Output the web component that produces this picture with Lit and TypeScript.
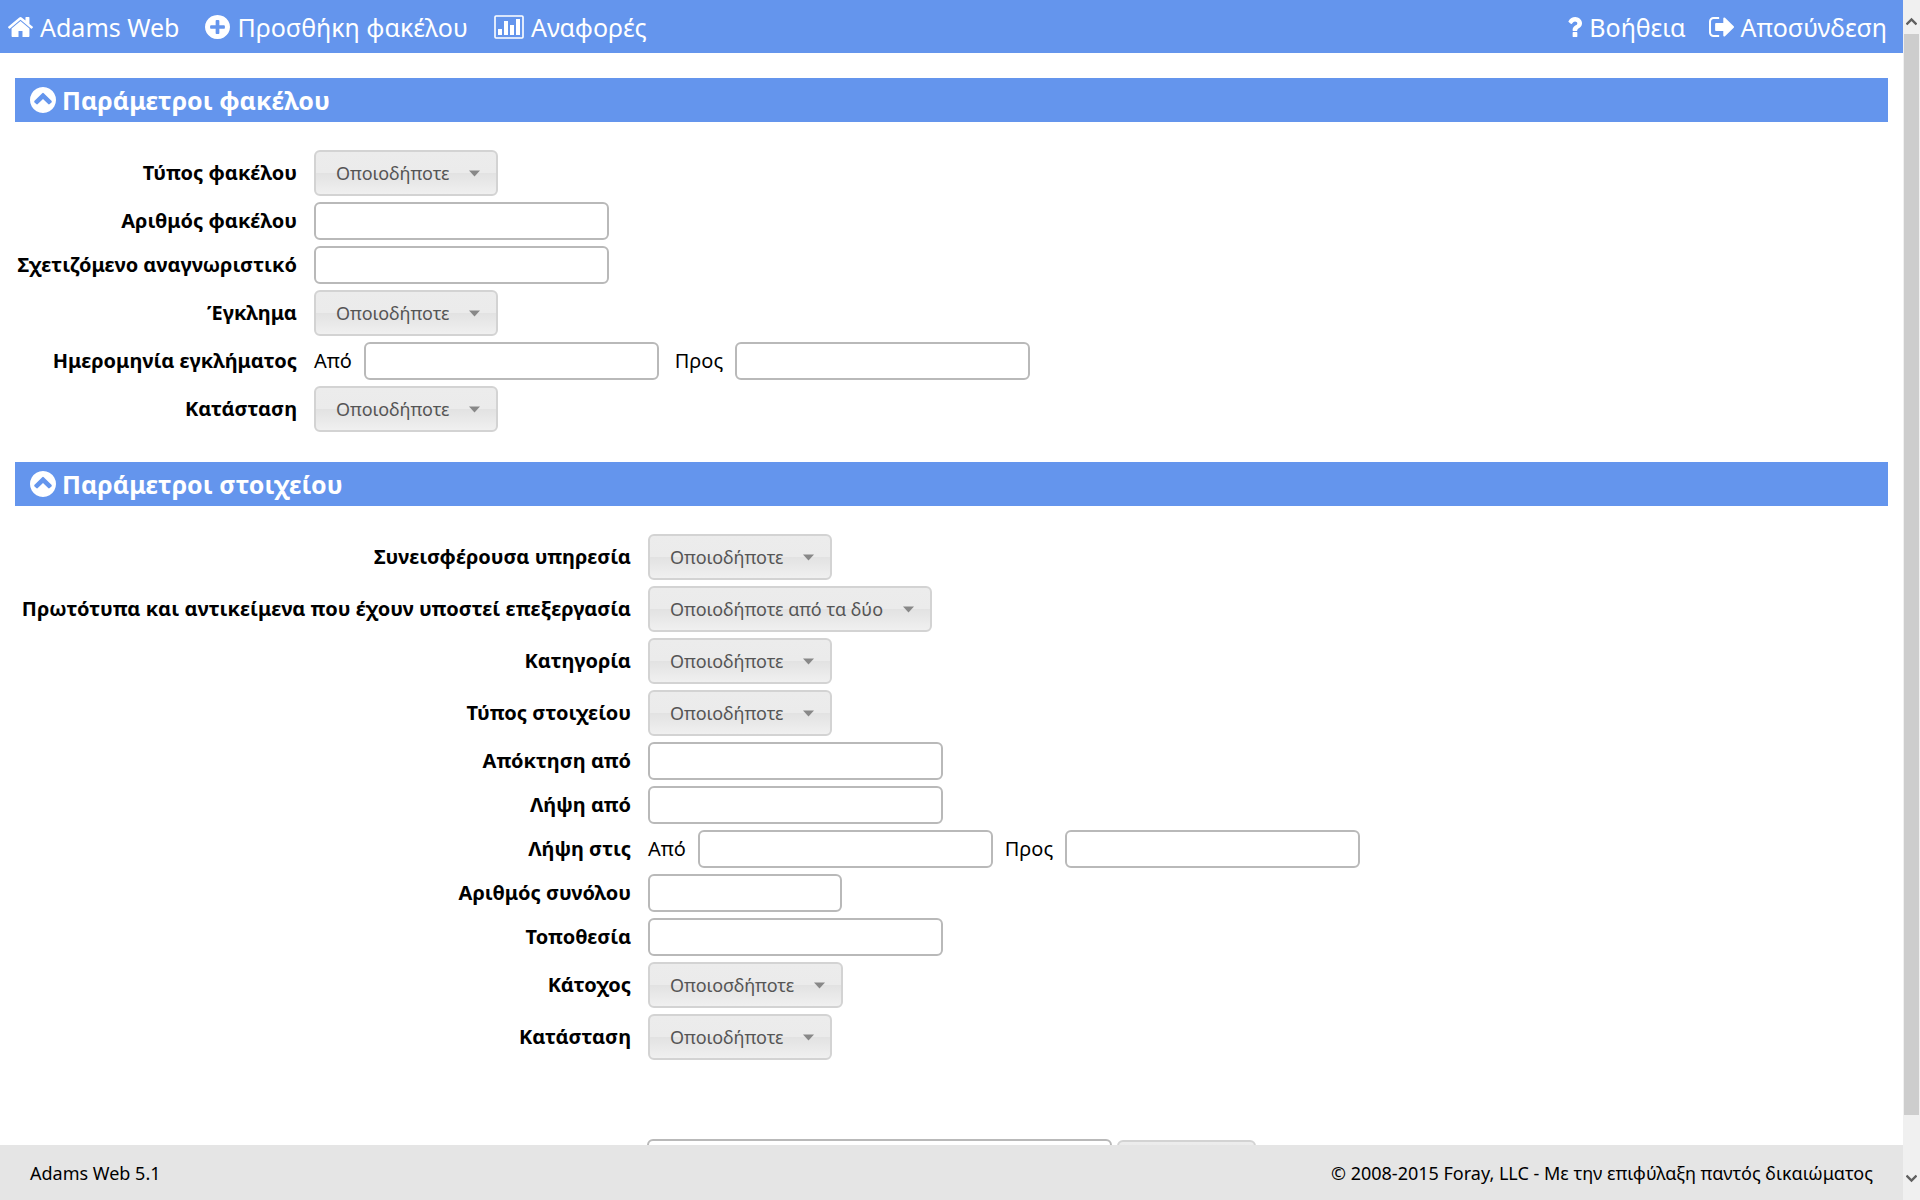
import { LitElement, html, css, svg, nothing } from "lit";
import type { TemplateResult } from "lit";
import { customElement, state } from "lit/decorators.js";

type Field =
  | { kind: "select"; id: string; label: string; value: string }
  | { kind: "text"; id: string; label: string; short?: boolean }
  | { kind: "range"; id: string; label: string; wide?: boolean };

const ANY = "Οποιοδήποτε";

const FOLDER_FIELDS: Field[] = [
  { kind: "select", id: "folder-type", label: "Τύπος φακέλου", value: ANY },
  { kind: "text", id: "folder-number", label: "Αριθμός φακέλου" },
  { kind: "text", id: "related-id", label: "Σχετιζόμενο αναγνωριστικό" },
  { kind: "select", id: "crime", label: "Έγκλημα", value: ANY },
  { kind: "range", id: "crime-date", label: "Ημερομηνία εγκλήματος", wide: true },
  { kind: "select", id: "folder-status", label: "Κατάσταση", value: ANY },
];

const ITEM_FIELDS: Field[] = [
  { kind: "select", id: "agency", label: "Συνεισφέρουσα υπηρεσία", value: ANY },
  {
    kind: "select",
    id: "originals",
    label: "Πρωτότυπα και αντικείμενα που έχουν υποστεί επεξεργασία",
    value: "Οποιοδήποτε από τα δύο",
  },
  { kind: "select", id: "category", label: "Κατηγορία", value: ANY },
  { kind: "select", id: "item-type", label: "Τύπος στοιχείου", value: ANY },
  { kind: "text", id: "acquired-by", label: "Απόκτηση από" },
  { kind: "text", id: "captured-by", label: "Λήψη από" },
  { kind: "range", id: "captured-on", label: "Λήψη στις" },
  { kind: "text", id: "set-number", label: "Αριθμός συνόλου", short: true },
  { kind: "text", id: "location", label: "Τοποθεσία" },
  { kind: "select", id: "holder", label: "Κάτοχος", value: "Οποιοσδήποτε" },
  { kind: "select", id: "item-status", label: "Κατάσταση", value: ANY },
];

const DISC =
  "M1664 896q0 209-103 385.5t-279.5 279.5-385.5 103-385.5-103-279.5-279.5-103-385.5 103-385.5 279.5-279.5 385.5-103 385.5 103 279.5 279.5 103 385.5z";

const icon = (w: number, h: number, box: string, body: TemplateResult | unknown) =>
  html`<svg width=${w} height=${h} viewBox=${box} preserveAspectRatio="none" fill="currentColor" aria-hidden="true">${body}</svg>`;

const homeIcon = icon(25, 20, "90 253 1612 1283", svg`<path d="M1472 992v480q0 26-19 45t-45 19h-384v-384h-256v384h-384q-26 0-45-19t-19-45v-480q0-1 .5-3t.5-3l575-474 575 474q1 2 1 6zm223-69l-62 74q-8 9-21 11h-3q-13 0-21-7l-692-577-692 577q-12 8-24 7-13-2-21-11l-62-74q-8-10-7-23.5t11-21.5l719-599q32-26 76-26t76 26l244 204v-195q0-14 9-23t23-9h192q14 0 23 9t9 23v408l219 182q10 8 11 21.5t-7 23.5z"/>`);
const plusIcon = icon(25, 24, "128 128 1536 1536", svg`<path fill-rule="evenodd" d="M1350 946v-100q0-26-19-45t-45-19h-276v-276q0-26-19-45t-45-19h-100q-26 0-45 19t-19 45v276h-276q-26 0-45 19t-19 45v100q0 26 19 45t45 19h276v276q0 26 19 45t45 19h100q26 0 45-19t19-45v-276h276q26 0 45-19t19-45z${DISC}"/>`);
const chartIcon = icon(30, 24, "0 0 30 24", svg`<rect x="1" y="1" width="28" height="22" rx="1" fill="none" stroke="currentColor" stroke-width="1.6"/><path d="M4 14h4v6H4zM10 6h4v14h-4zM16 10h4v10h-4zM22 4h4v16h-4z"/>`);
const helpIcon = icon(15, 20, "385 256 1019 1280", svg`<path d="M1088 1256v240q0 16-12 28t-28 12h-240q-16 0-28-12t-12-28v-240q0-16 12-28t28-12h240q16 0 28 12t12 28zm316-600q0 54-15.5 101t-35 76.5-55 59.5-57.5 43.5-61 35.5q-41 23-68.5 65t-27.5 67q0 17-12 32.5t-28 15.5h-240q-15 0-25.5-18.5t-10.5-37.5v-45q0-83 65-156.5t143-108.5q59-27 84-56t25-76q0-42-46.5-74t-107.5-32q-65 0-108 29-35 25-107 115-13 16-31 16-12 0-25-8l-164-125q-13-10-15.5-25t5.5-28q160-266 464-266 80 0 161 31t146 83 106 127.5 41 158.5z"/>`);
const signOutIcon = icon(25, 20, "64 256 1568 1280", svg`<path d="M704 1440q0 4 1 20t.5 26.5-3 23.5-10 19.5-20.5 6.5h-320q-119 0-203.5-84.5t-84.5-203.5v-704q0-119 84.5-203.5t203.5-84.5h320q13 0 22.5 9.5t9.5 22.5q0 4 1 20t.5 26.5-3 23.5-10 19.5-20.5 6.5h-320q-66 0-113 47t-47 113v704q0 66 47 113t113 47h312l11.5 1 11.5 3 8 5.5 7 9 2 13.5zm928-544q0 26-19 45l-544 544q-19 19-45 19t-45-19-19-45v-288h-448q-26 0-45-19t-19-45v-384q0-26 19-45t45-19h448v-288q0-26 19-45t45-19 45 19l544 544q19 19 19 45z"/>`);
const chevronIcon = icon(26, 26, "128 128 1536 1536", svg`<path fill-rule="evenodd" d="M1293 1139l102-102q19-19 19-45t-19-45l-454-454q-19-19-45-19t-45 19l-454 454q-19 19-19 45t19 45l102 102q19 19 45 19t45-19l307-307 307 307q19 19 45 19t45-19z${DISC}"/>`);

@customElement("app-root")
export class AppRoot extends LitElement {
  static styles = css`
    :host {
      display: block;
      font-family: "Noto Sans", "Open Sans", sans-serif;
      font-size: 20px;
      line-height: 28px;
      color: #000;
      background: #fff;
    }
    * {
      box-sizing: border-box;
    }
    svg {
      display: block;
      flex: none;
    }
    .frame {
      display: flex;
      height: 100vh;
    }
    .page {
      flex: 1;
      min-width: 0;
      display: flex;
      flex-direction: column;
    }
    .nav {
      flex: none;
      display: flex;
      justify-content: space-between;
      height: 53px;
      padding: 0 16px 0 8px;
      background: #6495ed;
      font-size: 25px;
    }
    .nav-group {
      display: flex;
      gap: 26px;
    }
    .nav-group.end {
      gap: 23px;
    }
    .nav-link {
      display: flex;
      align-items: center;
      gap: 7px;
      color: #fff;
      text-decoration: none;
      white-space: nowrap;
    }
    .main {
      flex: 1;
      min-height: 0;
      overflow: hidden;
      padding: 25px 15px 0;
    }
    .bar {
      margin: 0;
      background: #6495ed;
      font-size: 25px;
    }
    .bar-toggle {
      display: flex;
      align-items: center;
      gap: 6px;
      width: 100%;
      height: 44px;
      padding: 0 15px;
      border: 0;
      background: none;
      color: #fff;
      font: inherit;
      font-weight: 700;
      text-align: left;
      cursor: pointer;
    }
    .fields {
      display: grid;
      align-items: center;
      justify-content: start;
      gap: 6px 17px;
      padding: 28px 2px 30px;
    }
    .fields.folder {
      grid-template-columns: minmax(280px, max-content) auto;
    }
    .fields.item {
      grid-template-columns: minmax(614px, max-content) auto;
    }
    .name {
      font-weight: 700;
      text-align: right;
    }
    .value {
      display: flex;
      align-items: center;
      gap: 12px;
    }
    .gap-wide {
      margin-left: 4px;
    }
    .input {
      width: 295px;
      height: 38px;
      padding: 4px 8px;
      border: 2px solid #b9b9b9;
      border-radius: 6px;
      background: #fff;
      font: inherit;
    }
    .input.short {
      width: 194px;
    }
    .input.keywords {
      width: 465px;
      height: 48px;
    }
    .picker {
      display: inline-grid;
      align-items: center;
    }
    .picker > * {
      grid-area: 1 / 1;
    }
    .picker svg {
      justify-self: end;
      margin-right: 18px;
      color: #888;
      pointer-events: none;
    }
    .select,
    .submit {
      height: 46px;
      border: 2px solid #d3d3d3;
      border-radius: 6px;
      background: linear-gradient(#ececec 0%, #ebebeb 49%, #e2e2e2 50%, #f0f0f0 100%);
      color: #555;
      font: inherit;
      font-size: 18px;
    }
    .select {
      appearance: none;
      padding: 0 46px 0 20px;
    }
    .submit {
      width: 139px;
    }
    .search {
      display: flex;
      align-items: center;
      justify-content: center;
      gap: 5px;
      padding-top: 49px;
    }
    .footer {
      flex: none;
      display: flex;
      align-items: center;
      justify-content: space-between;
      height: 55px;
      padding: 0 30px;
      background: #e5e5e5;
      font-size: 18px;
    }
    .scroll {
      flex: none;
      display: flex;
      flex-direction: column;
      width: 17px;
      padding: 0 1px;
      background: #f0f0f0;
      color: #606060;
    }
    .step {
      display: flex;
      align-items: flex-end;
      justify-content: center;
      height: 34px;
      padding: 8px 0;
    }
    .step.down {
      align-items: flex-start;
    }
    .track {
      flex: 1;
    }
    .thumb {
      height: 95.5%;
      background: #cdcdcd;
    }
  `;

  @state() private folded: string[] = [];

  private toggle(key: string) {
    this.folded = this.folded.includes(key)
      ? this.folded.filter((k) => k !== key)
      : [...this.folded, key];
  }

  private control(f: Field) {
    if (f.kind === "select") {
      return html`<span class="picker">
        <select class="select" id=${f.id}><option>${f.value}</option></select>
        <svg width="11" height="7" viewBox="0 0 11 7" fill="currentColor" aria-hidden="true"><path d="M0 0.5h11L5.5 6.5z" /></svg>
      </span>`;
    }
    if (f.kind === "text") {
      return html`<input class="input ${f.short ? "short" : ""}" id=${f.id} type="text" />`;
    }
    return html`<label for=${f.id}>Από</label>
      <input class="input" id=${f.id} type="text" />
      <label class=${f.wide ? "gap-wide" : nothing} for="${f.id}-to">Προς</label>
      <input class="input" id="${f.id}-to" type="text" />`;
  }

  private section(key: string, title: string, fields: Field[]) {
    const open = !this.folded.includes(key);
    return html`<section>
      <h2 class="bar">
        <button class="bar-toggle" type="button" aria-expanded=${open} @click=${() => this.toggle(key)}>
          ${chevronIcon}<span>${title}</span>
        </button>
      </h2>
      ${open
        ? html`<div class="fields ${key}">
            ${fields.map(
              (f) => html`<label class="name" for=${f.id}>${f.label}</label>
                <div class="value">${this.control(f)}</div>`,
            )}
          </div>`
        : nothing}
    </section>`;
  }

  render() {
    return html`<div class="frame">
      <div class="page">
        <nav class="nav">
          <div class="nav-group">
            <a class="nav-link" href="#home">${homeIcon}<span>Adams Web</span></a>
            <a class="nav-link" href="#add">${plusIcon}<span>Προσθήκη φακέλου</span></a>
            <a class="nav-link" href="#reports">${chartIcon}<span>Αναφορές</span></a>
          </div>
          <div class="nav-group end">
            <a class="nav-link" href="#help">${helpIcon}<span>Βοήθεια</span></a>
            <a class="nav-link" href="#logout">${signOutIcon}<span>Αποσύνδεση</span></a>
          </div>
        </nav>
        <main class="main">
          ${this.section("folder", "Παράμετροι φακέλου", FOLDER_FIELDS)}
          ${this.section("item", "Παράμετροι στοιχείου", ITEM_FIELDS)}
          <div class="search">
            <input class="input keywords" type="text" aria-label="Αναζήτηση" />
            <button class="submit" type="button" aria-label="Αναζήτηση"></button>
          </div>
        </main>
        <footer class="footer">
          <span>Adams Web 5.1</span>
          <span>© 2008-2015 Foray, LLC - Με την επιφύλαξη παντός δικαιώματος</span>
        </footer>
      </div>
      <div class="scroll" aria-hidden="true">
        <div class="step"><svg width="11" height="9" viewBox="0 0 11 9" fill="none" stroke="currentColor" stroke-width="2.4"><path d="M0.5 7.5l5-5 5 5" /></svg></div>
        <div class="track"><div class="thumb"></div></div>
        <div class="step down"><svg width="11" height="9" viewBox="0 0 11 9" fill="none" stroke="currentColor" stroke-width="2.4"><path d="M0.5 1.5l5 5 5-5" /></svg></div>
      </div>
    </div>`;
  }
}
